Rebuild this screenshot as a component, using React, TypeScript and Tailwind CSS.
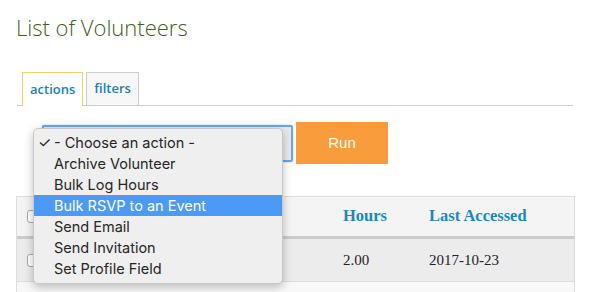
const menuItems = [
  "- Choose an action -",
  "Archive Volunteer",
  "Bulk Log Hours",
  "Bulk RSVP to an Event",
  "Send Email",
  "Send Invitation",
  "Set Profile Field",
];

const Checkbox = () => (
  <span className="block w-[13px] h-[13px] rounded-[3px] border border-[#a8a8a8] bg-white" />
);

export default function App() {
  return (
    <div className="relative w-[594px] h-[292px] overflow-hidden bg-white font-['Open_Sans',sans-serif]">
      <h1 className="pl-4 pt-[12px] text-[22px] leading-[30px] font-light text-[#3d5f22]">List of Volunteers</h1>

      {/* tabs */}
      <div className="mt-[30px] ml-[17px] mr-[21px] flex items-end gap-[3px] border-b border-[#cccccc] pl-[5px]">
        <div className="-mb-px h-[34px] px-[7px] flex items-center border border-b-0 border-[#f4d061] bg-white text-[13px] font-semibold text-[#1b7fb3]">
          actions
        </div>
        <div className="-mb-px h-[34px] px-[7px] flex items-center border border-[#cccccc] bg-[#f7f7f7] text-[13px] font-semibold text-[#1b7fb3]">
          filters
        </div>
      </div>

      {/* action row */}
      <div className="mt-[16px] ml-[42px] flex items-center gap-[3px]">
        <div className="w-[251px] h-[37px] rounded-[2px] border-2 border-[#6aa6e6] bg-[#e9e9e9] shadow-[0_0_2px_#9cc4f0]" />
        <button className="w-[92px] h-[42px] bg-[#f99d3c] text-white text-[15px] font-['Liberation_Sans',sans-serif]">
          Run
        </button>
      </div>

      {/* table */}
      <div className="mt-[32px] ml-4 w-[559px] border-x border-[#dddddd] font-['Liberation_Serif',serif]">
        <div className="grid grid-cols-[326px_86px_1fr] items-center h-[43px] bg-[#f4f4f4] border-t border-[#dddddd] border-b-[3px] border-b-[#cccccc] font-bold text-[16.5px] text-[#1e87b6]">
          <div className="pl-[10px]"><Checkbox /></div>
          <div>Hours</div>
          <div>Last Accessed</div>
        </div>
        <div className="grid grid-cols-[326px_86px_1fr] items-center h-[43px] bg-[#ececec] border-b border-[#dddddd] text-[15px] text-[#222222]">
          <div className="pl-[10px]"><Checkbox /></div>
          <div>2.00</div>
          <div>2017-10-23</div>
        </div>
        <div className="h-[20px] bg-[#f8f8f8]" />
      </div>

      {/* open select menu */}
      <div className="absolute left-[33px] top-[128px] w-[250px] pt-[3px] pb-[4px] rounded-[5px] border border-[#c8c8c8] bg-[#efefef] shadow-[0_3px_10px_rgba(0,0,0,0.25)] font-['Inter',sans-serif] text-[14.5px] text-[#262626]">
        {menuItems.map((item, i) => (
          <div
            key={item}
            className={`relative h-[21px] leading-[21px] pl-[20px] ${i === 3 ? "bg-[#4a9af6] text-white" : ""}`}
          >
            {i === 0 && <span className="absolute left-[4px] top-0 text-[15px]">✓</span>}
            {item}
          </div>
        ))}
      </div>
    </div>
  );
}
